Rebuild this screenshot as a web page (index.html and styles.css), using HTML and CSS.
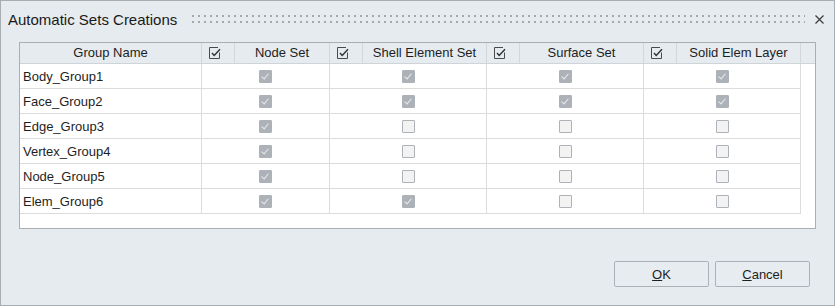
FILE: index.html
```html
<!DOCTYPE html>
<html>
<head>
<meta charset="utf-8">
<link rel="stylesheet" href="styles.css">
</head>
<body>
<div class="window">
  <div class="titlebar">
    <span class="title">Automatic Sets Creations</span>
    <span class="grip"></span>
    <svg class="close" width="9" height="9" viewBox="0 0 9 9"><path d="M0.5 0.5 L8.5 8.5 M8.5 0.5 L0.5 8.5" stroke="#3c3c3c" stroke-width="1.2" fill="none"/></svg>
  </div>
  <div class="grid">
    <div class="hdr">
      <div class="hc c-name">Group Name</div>
      <div class="hc c-ck"><svg class="hicon" width="13" height="13" viewBox="0 0 13 13"><path d="M10.5 5.5 V11.5 H0.5 V0.5 H9" stroke="#4a4a4a" stroke-width="1" fill="none"/><path d="M3 6 L5.2 8.4 L11 2.2" stroke="#2e2e2e" stroke-width="1.4" fill="none"/></svg></div>
      <div class="hc c-node">Node Set</div>
      <div class="hc c-ck"><svg class="hicon" width="13" height="13" viewBox="0 0 13 13"><path d="M10.5 5.5 V11.5 H0.5 V0.5 H9" stroke="#4a4a4a" stroke-width="1" fill="none"/><path d="M3 6 L5.2 8.4 L11 2.2" stroke="#2e2e2e" stroke-width="1.4" fill="none"/></svg></div>
      <div class="hc c-lbl">Shell Element Set</div>
      <div class="hc c-ck"><svg class="hicon" width="13" height="13" viewBox="0 0 13 13"><path d="M10.5 5.5 V11.5 H0.5 V0.5 H9" stroke="#4a4a4a" stroke-width="1" fill="none"/><path d="M3 6 L5.2 8.4 L11 2.2" stroke="#2e2e2e" stroke-width="1.4" fill="none"/></svg></div>
      <div class="hc c-lbl">Surface Set</div>
      <div class="hc c-ck"><svg class="hicon" width="13" height="13" viewBox="0 0 13 13"><path d="M10.5 5.5 V11.5 H0.5 V0.5 H9" stroke="#4a4a4a" stroke-width="1" fill="none"/><path d="M3 6 L5.2 8.4 L11 2.2" stroke="#2e2e2e" stroke-width="1.4" fill="none"/></svg></div>
      <div class="hc c-lbl">Solid Elem Layer</div>
      <div class="hc c-rest"></div>
    </div>

    <div class="row">
      <div class="dc d-name">Body_Group1</div>
      <div class="dc d-node"><span class="cb on"></span></div>
      <div class="dc d-set"><span class="cb on"></span></div>
      <div class="dc d-set"><span class="cb on"></span></div>
      <div class="dc d-set"><span class="cb on"></span></div>
    </div>
    <div class="row">
      <div class="dc d-name">Face_Group2</div>
      <div class="dc d-node"><span class="cb on"></span></div>
      <div class="dc d-set"><span class="cb on"></span></div>
      <div class="dc d-set"><span class="cb on"></span></div>
      <div class="dc d-set"><span class="cb on"></span></div>
    </div>
    <div class="row">
      <div class="dc d-name">Edge_Group3</div>
      <div class="dc d-node"><span class="cb on"></span></div>
      <div class="dc d-set"><span class="cb"></span></div>
      <div class="dc d-set"><span class="cb"></span></div>
      <div class="dc d-set"><span class="cb"></span></div>
    </div>
    <div class="row">
      <div class="dc d-name">Vertex_Group4</div>
      <div class="dc d-node"><span class="cb on"></span></div>
      <div class="dc d-set"><span class="cb"></span></div>
      <div class="dc d-set"><span class="cb"></span></div>
      <div class="dc d-set"><span class="cb"></span></div>
    </div>
    <div class="row">
      <div class="dc d-name">Node_Group5</div>
      <div class="dc d-node"><span class="cb on"></span></div>
      <div class="dc d-set"><span class="cb"></span></div>
      <div class="dc d-set"><span class="cb"></span></div>
      <div class="dc d-set"><span class="cb"></span></div>
    </div>
    <div class="row">
      <div class="dc d-name">Elem_Group6</div>
      <div class="dc d-node"><span class="cb on"></span></div>
      <div class="dc d-set"><span class="cb on"></span></div>
      <div class="dc d-set"><span class="cb"></span></div>
      <div class="dc d-set"><span class="cb"></span></div>
    </div>
  </div>
  <div class="footer">
    <button class="btn"><u>O</u>K</button>
    <button class="btn"><u>C</u>ancel</button>
  </div>
</div>
</body>
</html>
```
FILE: styles.css
```css
* { box-sizing: border-box; }
html, body { margin: 0; padding: 0; }
body {
  width: 835px;
  height: 306px;
  font-family: "Liberation Sans", Arial, sans-serif;
  color: #1e1e1e;
  background: #e5ebef;
}
.window {
  width: 835px;
  height: 306px;
  border: 1px solid #a8adb2;
  background: #e5ebef;
  display: flex;
  flex-direction: column;
}
.titlebar {
  display: flex;
  align-items: flex-start;
  padding: 10px 10px 0 7px;
  height: 27px;
}
.title {
  font-size: 15px;
  line-height: 17px;
  color: #1a1a1a;
  white-space: nowrap;
}
.grip {
  flex: 1;
  height: 8px;
  margin: 4px 0 0 15px;
  background: conic-gradient(at 2px 2px, transparent 75%, #a3a8ad 0) 0 0 / 6px 6px;
}
.close {
  margin: 4px 0 0 10px;
  display: block;
}
.grid {
  margin: 14px 0 0 18px;
  width: 797px;
  height: 187px;
  border: 1px solid #a9aeb3;
  background: #fff;
}
.hdr {
  display: flex;
  height: 21px;
  background: #e5ebef;
  border-bottom: 1px solid #cfd4d8;
}
.hc {
  height: 20px;
  line-height: 20px;
  font-size: 13px;
  text-align: center;
  border-right: 1px solid #d3d7db;
  white-space: nowrap;
}
.c-name { width: 182px; }
.c-ck { width: 33px; display: flex; align-items: center; padding-left: 7px; }
.c-node { width: 95px; }
.c-lbl { width: 124px; }
.c-rest { flex: 1; border-right: none; }
.hicon { display: block; }
.row {
  display: flex;
  width: 781px;
  height: 25px;
  border-bottom: 1px solid #dcdcdc;
}
.dc {
  height: 24px;
  border-right: 1px solid #dcdcdc;
  display: flex;
  align-items: center;
  justify-content: center;
  font-size: 13px;
}
.d-name { width: 182px; justify-content: flex-start; padding-left: 3px; }
.d-node { width: 128px; }
.d-set { width: 157px; }
.cb {
  width: 13px;
  height: 13px;
  border: 1px solid #adb2b9;
  background: #f3f3f3;
  border-radius: 1px;
  position: relative;
}
.cb.on {
  background: #adb2b9;
}
.cb.on::after {
  content: "";
  position: absolute;
  left: 3px;
  top: 1px;
  width: 3px;
  height: 6px;
  border-right: 1.5px solid #e9ebee;
  border-bottom: 1.5px solid #e9ebee;
  transform: rotate(40deg);
}
.footer {
  display: flex;
  justify-content: flex-end;
  gap: 6px;
  margin-top: 32px;
  padding-right: 24px;
}
.btn {
  width: 95px;
  height: 26px;
  border: 1px solid #acb1b7;
  border-radius: 2px;
  background: #e6ecf0;
  font-family: "Liberation Sans", Arial, sans-serif;
  font-size: 13px;
  color: #1e1e1e;
  padding: 0;
}
```
